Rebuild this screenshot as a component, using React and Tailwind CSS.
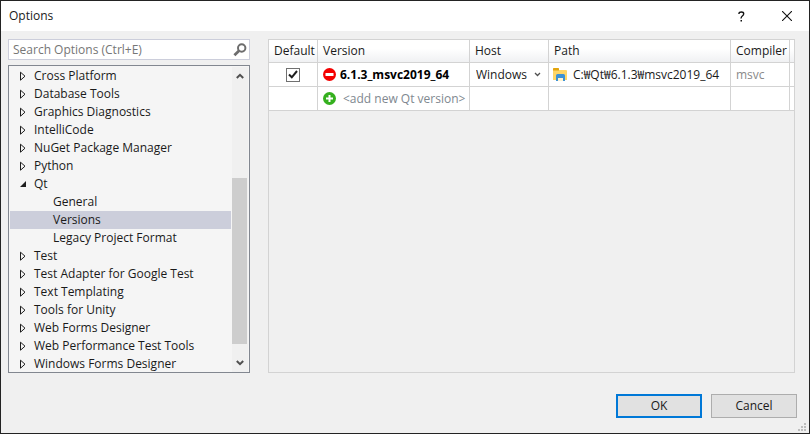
import { useState } from "react";

const TREE = [
  { label: "Cross Platform" },
  { label: "Database Tools" },
  { label: "Graphics Diagnostics" },
  { label: "IntelliCode" },
  { label: "NuGet Package Manager" },
  { label: "Python" },
  { label: "Qt", children: ["General", "Versions", "Legacy Project Format"] },
  { label: "Test" },
  { label: "Test Adapter for Google Test" },
  { label: "Text Templating" },
  { label: "Tools for Unity" },
  { label: "Web Forms Designer" },
  { label: "Web Performance Test Tools" },
  { label: "Windows Forms Designer" },
];

const COLUMNS = ["Default", "Version", "Host", "Path", "Compiler"];

function Expander({ open }) {
  return (
    <svg width="8" height="10" viewBox="0 0 8 10" className="shrink-0">
      {open ? (
        <path d="M6 2v6H0z" fill="#1e1e1e" />
      ) : (
        <path d="M0.500 1.200v8L5 5.200z" fill="none" stroke="#1e1e1e" />
      )}
    </svg>
  );
}

function Arrow({ down }) {
  return (
    <svg width="8" height="6" viewBox="0 0 8 6" className={down ? "rotate-180" : ""}>
      <path d="M0.800 5 4 1.800 7.200 5" fill="none" stroke="#505050" strokeWidth="2" />
    </svg>
  );
}

function SearchIcon() {
  return (
    <svg width="14" height="14" viewBox="0 0 14 14">
      <circle cx="8.700" cy="5" r="3.700" fill="none" stroke="#6d6d6d" strokeWidth="2" />
      <path d="M6 7.800 1.400 12.200" stroke="#6d6d6d" strokeWidth="2.800" />
    </svg>
  );
}

function RoundIcon({ plus }) {
  return (
    <svg width="13" height="13" viewBox="0 0 13 13">
      <circle cx="6.500" cy="6.500" r="6.500" fill={plus ? "#35b01e" : "#f40000"} />
      <path d={plus ? "M3 6.500h7" : "M2.500 6.500h8"} stroke="#fff" strokeWidth={plus ? 2 : 3} />
      {plus && <path d="M6.500 3v7" stroke="#fff" strokeWidth="2" />}
    </svg>
  );
}

function FolderIcon() {
  return (
    <svg width="15" height="13" viewBox="0 0 15 13">
      <path d="M0 1q0-1 1-1h4q1 0 1 1v1h7q1 0 1 1v9H0z" fill="#ffd667" />
      <path d="M0 1q0-1 1-1h4q1 0 1 1v1.500H0z" fill="#e2a40e" />
      <path d="M3 13V7.500Q3 6 4.500 6h6Q12 6 12 7.500V13h-2v-3H5v3z" fill="#3e92d4" />
      <path d="M5 10h5v3H5z" fill="#fff3cf" />
    </svg>
  );
}

function SizeGrip() {
  const dots = [[6, 0], [3, 3], [6, 3], [0, 6], [3, 6], [6, 6]];
  return (
    <svg width="8" height="8" viewBox="0 0 8 8" className="absolute right-[3px] bottom-[2px]">
      {dots.map(([x, y]) => (
        <rect key={`${x}-${y}`} x={x} y={y} width="2" height="2" fill="#bdbdbd" />
      ))}
    </svg>
  );
}

function TreeItem({ label, nested, open, selected, onSelect }) {
  return (
    <button
      type="button"
      role="treeitem"
      aria-selected={selected}
      onClick={() => onSelect(label)}
      className={[
        "flex h-[18px] w-full shrink-0 items-center gap-1.5 whitespace-nowrap text-left leading-[18px]",
        nested ? "pl-[43px]" : "pl-2.5",
        selected ? "bg-[#cccedb]" : "",
      ].join(" ")}
    >
      {!nested && <Expander open={open} />}
      {label}
    </button>
  );
}

function OptionsTree() {
  const [selected, setSelected] = useState("Versions");
  return (
    <div className="flex min-h-0 flex-1 border border-[#828790] bg-[#f5f5f5] p-px pb-0">
      <div role="tree" aria-label="Options" className="flex min-w-0 flex-1 flex-col overflow-hidden">
        {TREE.flatMap((node) => [
          <TreeItem
            key={node.label}
            label={node.label}
            open={!!node.children}
            selected={selected === node.label}
            onSelect={setSelected}
          />,
          ...(node.children ?? []).map((child) => (
            <TreeItem key={child} label={child} nested selected={selected === child} onSelect={setSelected} />
          )),
        ])}
      </div>

      {/* Scrollbar */}
      <div className="ml-px flex w-4 flex-col bg-[#f0f0f0]">
        <button type="button" aria-label="Scroll up" className="flex h-[18px] items-center justify-center">
          <Arrow />
        </button>
        <div className="flex flex-1 flex-col">
          <div className="flex-[93]" />
          <div className="mr-px flex-[166] bg-[#cdcdcd]" />
          <div className="flex-[10]" />
        </div>
        <button type="button" aria-label="Scroll down" className="flex h-[18px] items-center justify-center">
          <Arrow down />
        </button>
      </div>
    </div>
  );
}

function VersionsTable() {
  const cell = "h-6 border-r border-b border-[#d3d3d3] bg-white p-0";
  return (
    <div className="min-w-0 flex-1 overflow-hidden border border-[#d3d3d3]">
      <table className="w-full table-fixed border-separate border-spacing-0 whitespace-nowrap">
        <colgroup>
          <col className="w-[49px]" />
          <col className="w-[152px]" />
          <col className="w-[79px]" />
          <col />
          <col className="w-[59px]" />
          <col className="w-1" />
        </colgroup>
        <thead>
          <tr>
            {COLUMNS.map((name) => (
              <th
                key={name}
                className="h-[23px] border-r border-b border-[#d3d3d3] bg-linear-to-b from-white from-40% to-[#f0f1f3] p-0 pl-[5px] text-left font-normal"
              >
                {name}
              </th>
            ))}
            <th className="border-b border-[#d3d3d3] bg-linear-to-b from-white from-40% to-[#f0f1f3] p-0" />
          </tr>
        </thead>
        <tbody>
          <tr>
            <td className={cell}>
              <label className="relative flex items-center justify-center">
                <input
                  type="checkbox"
                  defaultChecked
                  aria-label="Default version"
                  className="peer size-3.5 appearance-none border border-[#707070] bg-white"
                />
                <svg width="10" height="9" viewBox="0 0 10 9" className="pointer-events-none absolute hidden peer-checked:block">
                  <path d="M1 4.500 3.800 7.300 9 1" fill="none" stroke="#1e1e1e" strokeWidth="2" />
                </svg>
              </label>
            </td>
            <td className={cell}>
              <div className="flex items-center gap-1 pl-[5px]">
                <button type="button" aria-label="Remove version">
                  <RoundIcon />
                </button>
                <span className="font-bold text-black">6.1.3_msvc2019_64</span>
              </div>
            </td>
            <td className={cell}>
              <div className="relative flex items-center">
                <select aria-label="Host" className="w-full appearance-none bg-transparent pl-1.5">
                  <option>Windows</option>
                  <option>Linux SSH</option>
                  <option>Linux WSL</option>
                </select>
                <svg width="7" height="5" viewBox="0 0 7 5" className="pointer-events-none absolute right-[7px]">
                  <path d="M1 1l2.500 2.500L6 1" fill="none" stroke="#505050" strokeWidth="1.300" />
                </svg>
              </div>
            </td>
            <td className={cell}>
              <div className="flex items-center gap-[5px] pl-1">
                <button type="button" aria-label="Browse">
                  <FolderIcon />
                </button>
                <span>C:₩Qt₩6.1.3₩msvc2019_64</span>
              </div>
            </td>
            <td className={`${cell} text-[#8a8a8a]`}>
              <span className="pl-[5px]">msvc</span>
            </td>
            <td className="border-b border-[#d3d3d3] bg-white p-0" />
          </tr>
          <tr>
            <td className={cell} />
            <td className={cell}>
              <button type="button" className="flex items-center gap-[7px] pl-[5px] text-[#808890]">
                <RoundIcon plus />
                &lt;add new Qt version&gt;
              </button>
            </td>
            <td className={cell} />
            <td className={cell} />
            <td className={cell} />
            <td className="border-b border-[#d3d3d3] bg-white p-0" />
          </tr>
        </tbody>
      </table>
    </div>
  );
}

export default function App() {
  return (
    <div className="relative flex h-screen flex-col border border-[#232323] bg-[#f0f0f0] font-['Open_Sans','Noto_Sans_CJK_KR',sans-serif] text-[12px] leading-[18px] text-[#1a1a1a]">
      <header className="flex h-[30px] items-center bg-white pl-2">
        <h1 className="flex-1">Options</h1>
        <button type="button" aria-label="Help" className="flex h-full w-[45px] items-center justify-center">
          <svg width="7" height="11" viewBox="0 0 7 11">
            <path d="M1 3V2.300Q1 1 3.300 1T5.700 2.700Q5.700 4 4.300 5T3.200 7.500" fill="none" stroke="#111" strokeWidth="1.400" />
            <path d="M2.500 9h1.500v1.500H2.500z" fill="#111" />
          </svg>
        </button>
        <button type="button" aria-label="Close" className="flex h-full w-[45px] items-center justify-center">
          <svg width="10" height="10" viewBox="0 0 10 10">
            <path d="M0 0l10 10M10 0L0 10" stroke="#111" strokeWidth="1.100" />
          </svg>
        </button>
      </header>

      <main className="flex min-h-0 flex-1 gap-[18px] pt-2 pr-3.5 pl-[7px]">
        <aside className="flex w-[242px] flex-col gap-[5px]">
          <label className="flex h-[21px] items-center border border-[#cccedb] bg-white pr-0.5 pl-1">
            <input
              type="text"
              aria-label="Search Options"
              placeholder="Search Options (Ctrl+E)"
              className="min-w-0 flex-1 outline-none placeholder:text-[#767676]"
            />
            <SearchIcon />
          </label>
          <OptionsTree />
        </aside>
        <VersionsTable />
      </main>

      <footer className="flex justify-end gap-[9px] pt-[21px] pr-3 pb-[15px]">
        <button type="button" className="h-6 w-[86px] border-2 border-[#0078d7] bg-[#e1e1e1] leading-5">
          OK
        </button>
        <button type="button" className="h-6 w-[86px] border border-[#adadad] bg-[#e1e1e1] leading-5">
          Cancel
        </button>
      </footer>
      <SizeGrip />
    </div>
  );
}
